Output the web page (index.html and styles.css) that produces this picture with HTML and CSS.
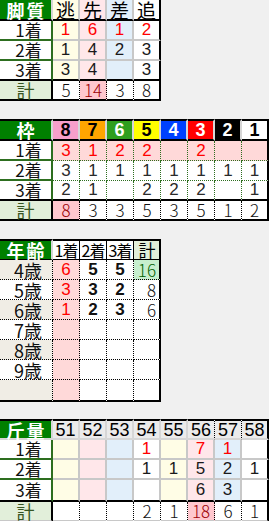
FILE: index.html
```html
<!DOCTYPE html>
<html lang="ja">
<head>
<meta charset="utf-8">
<link rel="stylesheet" href="styles.css">
</head>
<body>
<div class="tbl t1">
  <div class="c hl bb rl">脚質</div><div class="c hd y bb">逃</div><div class="c hd p bb">先</div><div class="c hd b bb">差</div><div class="c hd w bb rk">追</div>

  <div class="c lb rg bg">1着</div><div class="c d y r">1</div><div class="c d p r">6</div><div class="c d b r">1</div><div class="c d w r rk">2</div>
  <div class="c lb rg bg">2着</div><div class="c d y">1</div><div class="c d p">4</div><div class="c d b">2</div><div class="c d w rk">3</div>
  <div class="c lb rg bb">3着</div><div class="c d y bb">3</div><div class="c d p bb">4</div><div class="c d b bb"></div><div class="c d w rk bb">3</div>

  <div class="c tl rk bb">計</div><div class="c tt rd bb">5</div><div class="c tt bad rd bb">14</div><div class="c tt rd bb">3</div><div class="c tt rk bb">8</div>
</div>

<div class="tbl t2">
  <div class="c hl tk bb rl">枠</div><div class="c hn f8 tk bb rl">8</div><div class="c hn f7 tk bb rl">7</div><div class="c hn f6 tk bb rl">6</div><div class="c hn f5 tk bb rl">5</div><div class="c hn f4 tk bb rl">4</div><div class="c hn f3 tk bb rl">3</div><div class="c hn f2 tk bb rl">2</div><div class="c hn f1 tk bb rk">1</div>

  <div class="c lb rg bg">1着</div><div class="c d pk r rdg bdg">3</div><div class="c d pk r rdg bdg">1</div><div class="c d pk r rdg bdg">2</div><div class="c d pk r rdg bdg">2</div><div class="c d pk r rdg bdg"></div><div class="c d pk r rdg bdg">2</div><div class="c d pk r rdg bdg"></div><div class="c d pk r rk bdg"></div>
  <div class="c lb rg bg">2着</div><div class="c d g rdg bdg">3</div><div class="c d g rdg bdg">1</div><div class="c d g rdg bdg">1</div><div class="c d g rdg bdg">1</div><div class="c d g rdg bdg">1</div><div class="c d g rdg bdg">1</div><div class="c d g rdg bdg">1</div><div class="c d g rk bdg">1</div>
  <div class="c lb rg bb">3着</div><div class="c d g rdg bb">2</div><div class="c d g rdg bb">1</div><div class="c d g rdg bb"></div><div class="c d g rdg bb">2</div><div class="c d g rdg bb">2</div><div class="c d g rdg bb">2</div><div class="c d g rdg bb"></div><div class="c d g rk bb">1</div>

  <div class="c tl rk bb">計</div><div class="c tt bad rd bb">8</div><div class="c tt rd bb">3</div><div class="c tt rd bb">3</div><div class="c tt rd bb">5</div><div class="c tt rd bb">3</div><div class="c tt rd bb">5</div><div class="c tt rd bb">1</div><div class="c tt rk bb">2</div>
</div>

<div class="tbl t3">
  <div class="c hl tk b1 rl">年齢</div><div class="c hs tk b1 r1">1着</div><div class="c hs tk b1 r1">2着</div><div class="c hs tk b1 r1">3着</div><div class="c hs hg tk b1 rk">計</div>

  <div class="c la be rd bd">4歳</div><div class="c d pk r rd bd">6</div><div class="c d bo rd bd">5</div><div class="c d bo rd bd">5</div><div class="c tt good rk bd">16</div>
  <div class="c la rd bd">5歳</div><div class="c d pk r rd bd">3</div><div class="c d bo rd bd">3</div><div class="c d bo rd bd">2</div><div class="c tt right rk bd">8</div>
  <div class="c la be rd bd">6歳</div><div class="c d pk r rd bd">1</div><div class="c d bo rd bd">2</div><div class="c d bo rd bd">3</div><div class="c tt right rk bd">6</div>
  <div class="c la rd bd">7歳</div><div class="c d pk rd bd"></div><div class="c d rd bd"></div><div class="c d rd bd"></div><div class="c d rk bd"></div>
  <div class="c la be rd bd">8歳</div><div class="c d pk rd bd"></div><div class="c d rd bd"></div><div class="c d rd bd"></div><div class="c d rk bd"></div>
  <div class="c la rd bd">9歳</div><div class="c d pk rd bd"></div><div class="c d rd bd"></div><div class="c d rd bd"></div><div class="c d rk bd"></div>
  <div class="c la be rd bb"></div><div class="c d pk rd bb"></div><div class="c d rd bb"></div><div class="c d rd bb"></div><div class="c d rk bb"></div>
</div>

<div class="tbl t4">
  <div class="c hl tk bl rl">斤量</div><div class="c hw tk bl rl">51</div><div class="c hw tk bl rl">52</div><div class="c hw tk bl rl">53</div><div class="c hw tk bl rl">54</div><div class="c hw tk bl rl">55</div><div class="c hw tk bl rd">56</div><div class="c hw tk bl rd">57</div><div class="c hw tk bl rk">58</div>

  <div class="c lb rg bg">1着</div><div class="c d y"></div><div class="c d p"></div><div class="c d b"></div><div class="c d w r">1</div><div class="c d y"></div><div class="c d p r">7</div><div class="c d b r">1</div><div class="c d w rk"></div>
  <div class="c lb rg bg">2着</div><div class="c d y"></div><div class="c d p"></div><div class="c d b"></div><div class="c d w">1</div><div class="c d y">1</div><div class="c d p">5</div><div class="c d b">2</div><div class="c d w rk">1</div>
  <div class="c lb rg bb">3着</div><div class="c d y bb"></div><div class="c d p bb"></div><div class="c d b bb"></div><div class="c d w bb"></div><div class="c d y bb"></div><div class="c d p bb">6</div><div class="c d b bb">3</div><div class="c d w rk bb"></div>

  <div class="c tl rk">計</div><div class="c tt rd"></div><div class="c tt rd"></div><div class="c tt rd"></div><div class="c tt rd">2</div><div class="c tt rd">1</div><div class="c tt bad rd">18</div><div class="c tt rd">6</div><div class="c tt rk">1</div>
</div>
</body>
</html>
```
FILE: styles.css
```css
html, body {
  margin: 0;
  padding: 0;
  background: #f0f0f0;
}
body {
  width: 269px;
  height: 521px;
  overflow: hidden;
  font-family: "Liberation Sans", Arial, sans-serif;
}
.tbl {
  display: grid;
}
.t1 {
  grid-template-columns: 53px repeat(4, 27px);
  grid-template-rows: 21px 20px 20px 20px 20px;
  width: 161px;
}
.t2 {
  margin-top: 18px;
  grid-template-columns: 53px repeat(8, 27px);
  grid-template-rows: 22px 20px 20px 20px 20px;
  width: 269px;
}
.t3 {
  margin-top: 18px;
  grid-template-columns: 53px repeat(4, 27px);
  grid-template-rows: 21px repeat(6, 20px) 22px;
  width: 161px;
}
.t4 {
  margin-top: 17px;
  grid-template-columns: 53px repeat(8, 27px);
  grid-template-rows: 21px 20px 20px 22px 20px;
  width: 269px;
}
.c {
  box-sizing: border-box;
  display: flex;
  align-items: center;
  justify-content: center;
  border-right: 2px solid #c8c8c8;
  border-bottom: 2px solid #c8c8c8;
  background: #fff;
  white-space: nowrap;
  color: #1a1a1a;
  font-size: 17px;
  line-height: 16px;
}
/* header label */
.hl {
  background: #008000;
  color: #fff;
  font-family: "Noto Sans CJK JP", sans-serif;
  font-weight: 700;
  font-size: 18px;
  letter-spacing: 2px;
  padding-left: 2px;
}
.hd {
  font-family: "Noto Sans CJK JP", sans-serif;
  font-size: 19px;
  color: #000;
}
.hn {
  font-weight: 700;
  font-size: 18px;
  color: #000;
}
.hs {
  font-family: "Noto Sans CJK JP", sans-serif;
  font-size: 16px;
  letter-spacing: -1px;
  color: #000;
}
.hg { background: #e2efda; font-size: 17px; }
.hw {
  background: #ebebeb;
  font-size: 18px;
  color: #000;
}
.f8 { background: #f79fcb; }
.f7 { background: #ffa500; }
.f6 { background: #2e9e1e; color: #fff; }
.f5 { background: #ffff00; }
.f4 { background: #0040ff; color: #fff; }
.f3 { background: #ff0000; color: #fff; }
.f2 { background: #000; color: #fff; }
.f1 { background: #fff; }

/* row labels */
.lb, .la {
  font-family: "Noto Sans CJK JP", sans-serif;
  font-size: 17px;
  color: #111;
  padding-left: 6px;
}
.la { padding-left: 4px; font-size: 18px; }
.be { background: #f0ede5; }
.tl {
  background: #e2efda;
  color: #375623;
  font-family: "Noto Sans CJK JP", sans-serif;
  font-size: 18px;
}
.tt {
  font-family: "Noto Sans CJK JP", sans-serif;
  font-weight: 300;
  font-size: 17px;
  color: #111;
}
.right { justify-content: flex-end; padding-right: 3px; }
.bad { background: #ffc7ce; color: #9c0006; }
.good { background: #c6efce; color: #006100; justify-content: flex-end; padding-right: 3px; }

/* data */
.d { font-size: 17px; }
.bo { font-weight: 700; color: #111; }
.r { color: #ff0000; }
.y { background: #fffde6; }
.p { background: #ffe7ea; }
.b { background: #e2effa; }
.w { background: #fff; }
.pk { background: #ffd9d9; }
.g { background: #fff; color: #2a2a2a; }

/* borders */
.bb { border-bottom: 2px solid #000; }
.b1 { border-bottom: 1px solid #000; }
.bl { border-bottom: 2px solid #d6d6d6; }
.tk { border-top: 2px solid #000; }
.rk { border-right: 2px solid #000; }
.r1 { border-right: 1px solid #000; }
.rl { border-right: 2px solid #d6d6d6; }
.rg { border-right: 2px solid #2d6e1f; }
.bg { border-bottom: 2px solid #2d6e1f; }
.rd { border-right: 1px dotted #000; }
.bd { border-bottom: 1px dotted #000; }
.rdg { border-right: 1px dotted #2d6e1f; }
.bdg { border-bottom: 1px dotted #2d6e1f; }
```
